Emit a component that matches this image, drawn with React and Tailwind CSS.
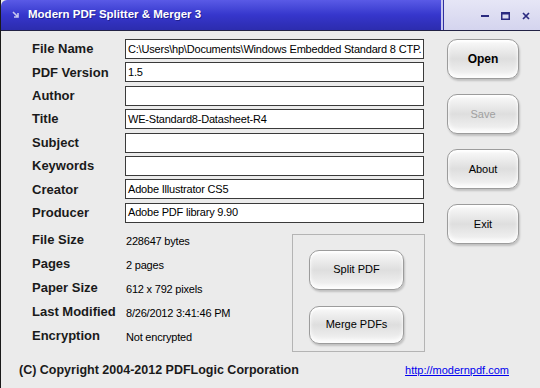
import React from "react";

const font = { fontFamily: '"Liberation Sans", Arial, sans-serif' };

function GlossButton({ children, className = "", disabled = false, bold = false }) {
  return (
    <div
      className={`flex items-center justify-center rounded-[10px] border border-[#9c9c9c] bg-linear-to-b from-[#fbfbfb] via-[#dedede] to-[#f6f6f6] shadow-[inset_0_-3px_4px_rgba(255,255,255,0.9),inset_0_2px_2px_rgba(255,255,255,0.9),1px_2px_2px_rgba(0,0,0,0.18)] ${
        disabled ? "text-[#a0a0a0]" : "text-black"
      } ${bold ? "font-bold text-[12px]" : "text-[11px]"} ${className}`}
    >
      {children}
    </div>
  );
}

const fields = [
  ["File Name", "C:\\Users\\hp\\Documents\\Windows Embedded Standard 8 CTP."],
  ["PDF Version", "1.5"],
  ["Author", ""],
  ["Title", "WE-Standard8-Datasheet-R4"],
  ["Subject", ""],
  ["Keywords", ""],
  ["Creator", "Adobe Illustrator CS5"],
  ["Producer", "Adobe PDF library 9.90"],
];

const infos = [
  ["File Size", "228647 bytes"],
  ["Pages", "2 pages"],
  ["Paper Size", "612 x 792 pixels"],
  ["Last Modified", "8/26/2012 3:41:46 PM"],
  ["Encryption", "Not encrypted"],
];

export default function App() {
  return (
    <div
      className="w-[540px] h-[388px] overflow-hidden bg-[#ebebeb] border-l border-[#1a1a1a] flex flex-col"
      style={font}
    >
      {/* Title bar */}
      <div className="h-[31px] flex shrink-0 border-b border-[#222244]">
        <div className="flex-1 flex items-center rounded-tl-[6px] bg-linear-to-b from-[#5a5ae6] via-[#3636cc] to-[#2c2cae]">
          <div className="w-[27px] flex justify-center pl-[2px]">
            <svg width="8" height="8" viewBox="0 0 8 8">
              <path d="M1 1 L6 6 M6 2 L6 6 L2 6" stroke="#c8c8f0" strokeWidth="1.6" fill="none" />
            </svg>
          </div>
          <span className="text-white font-bold text-[11.5px] [text-shadow:1px_1px_0_rgba(0,0,60,0.4)]">
            Modern PDF Splitter &amp; Merger 3
          </span>
        </div>
        <div className="w-[2px] bg-[#c8c8f0]" />
        <div className="w-[1px] bg-[#3030a0]" />
        <div className="w-[96px] bg-linear-to-b from-[#e6e6f6] to-[#d4d4ee] flex items-center justify-end gap-[12px] pr-[10px] pt-[2px]">
          <svg width="8" height="8" viewBox="0 0 8 8">
            <rect x="0" y="3" width="8" height="2" fill="#2a2a80" />
          </svg>
          <svg width="9" height="8" viewBox="0 0 9 8">
            <rect x="0.75" y="0.75" width="7.5" height="6.5" stroke="#2a2a80" strokeWidth="1.5" fill="none" />
            <rect x="0" y="0" width="9" height="2.5" fill="#2a2a80" />
          </svg>
          <svg width="8" height="8" viewBox="0 0 8 8">
            <path d="M1 1 L7 7 M7 1 L1 7" stroke="#2a2a80" strokeWidth="1.7" />
          </svg>
        </div>
      </div>

      {/* Body */}
      <div className="flex-1 flex flex-col">
        <div className="flex">
          {/* Left section */}
          <div className="w-[424px] shrink-0 flex flex-col">
            <div className="flex flex-col gap-[3.4px] pt-[8px]">
              {fields.map(([label, value]) => (
                <div key={label} className="flex items-center h-[20px]">
                  <div className="w-[124px] pl-[31px] text-[13px] font-bold text-[#1a1a1a]">{label}</div>
                  <div className="w-[299px] h-[20px] bg-white border border-[#3a3a3a] px-[2px] flex items-center text-[11px] text-black whitespace-nowrap overflow-hidden tracking-[-0.2px]">
                    {value}
                  </div>
                </div>
              ))}
            </div>

            <div className="flex mt-[5px]">
              <div className="flex flex-col">
                {infos.map(([label, value]) => (
                  <div key={label} className="flex items-center h-[24px]">
                    <div className="w-[125px] pl-[31px] text-[13px] font-bold text-[#1a1a1a] whitespace-nowrap">{label}</div>
                    <div className="text-[11px] text-black pt-[3px] tracking-[-0.2px]">{value}</div>
                  </div>
                ))}
              </div>
              <div className="ml-auto mt-[6px] w-[133px] h-[118px] border border-[#b4b4b4] flex flex-col items-start pl-[16px] pt-[15px] gap-[16px]">
                <GlossButton className="w-[95px] h-[40px]">Split PDF</GlossButton>
                <GlossButton className="w-[95px] h-[38px]">Merge PDFs</GlossButton>
              </div>
            </div>
          </div>

          {/* Right buttons */}
          <div className="flex flex-col pt-[8px] pl-[22px] gap-[15px]">
            <GlossButton bold className="w-[72px] h-[40px]">Open</GlossButton>
            <GlossButton disabled className="w-[72px] h-[40px]">Save</GlossButton>
            <GlossButton className="w-[72px] h-[40px]">About</GlossButton>
            <GlossButton className="w-[72px] h-[40px]">Exit</GlossButton>
          </div>
        </div>

        {/* Footer */}
        <div className="flex items-center mt-[9px] pl-[18px] pr-[31px]">
          <span className="text-[12.5px] font-bold text-[#1a1a1a]">(C) Copyright 2004-2012 PDFLogic Corporation</span>
          <span className="ml-auto text-[11px] text-[#0000ee] underline">http://modernpdf.com</span>
        </div>
      </div>
    </div>
  );
}
